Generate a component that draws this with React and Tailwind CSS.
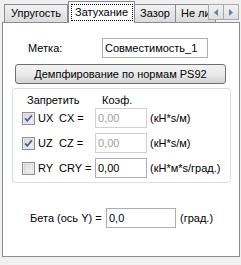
import React from "react";

const font = { fontFamily: '"Liberation Sans", Arial, sans-serif' };

const CheckBox = ({ checked }) => (
  <svg width="13" height="13" viewBox="0 0 13 13" className="shrink-0">
    <defs>
      <linearGradient id="cbg" x1="0" y1="0" x2="1" y2="1">
        <stop offset="0" stopColor="#d8d8d8" />
        <stop offset="1" stopColor="#f7f7f7" />
      </linearGradient>
    </defs>
    <rect x="0.5" y="0.5" width="12" height="12" fill="#f4f4f4" stroke="#8e8f8f" />
    <rect x="2" y="2" width="9" height="9" fill="url(#cbg)" stroke="#c6c6c6" strokeWidth="0.5" />
    {checked && (
      <path d="M3.2 6.4 L5.3 8.8 L9.8 3.4" fill="none" stroke="#4c61a0" strokeWidth="1.8" />
    )}
  </svg>
);

const Edit = ({ value, w, disabled }) => (
  <div
    className={`h-[20px] ${w} border bg-white flex items-center pl-[2px] text-[11px] shrink-0 ${
      disabled ? "text-[#a0a0a0] border-[#d0d0d0]" : "text-black border-[#abadb3]"
    }`}
  >
    {value}
  </div>
);

const Row = ({ checked, axis, label, value, units, disabled }) => (
  <div className="flex items-center h-[20px] text-[11px]">
    <div className="ml-[9px]">
      <CheckBox checked={checked} />
    </div>
    <span className="ml-[3px] w-[21px]">{axis}</span>
    <span className="w-[36px] whitespace-nowrap">{label}</span>
    <Edit value={value} w="w-[52px]" disabled={disabled} />
    <span className="ml-[3px] whitespace-nowrap">{units}</span>
  </div>
);

export default function App() {
  return (
    <div className="w-[241px] h-[265px] bg-[#f0f0f0] relative overflow-hidden text-black text-[11px]" style={font}>
      {/* tabs */}
      <div className="flex items-end h-[22px] pl-[4px] relative z-10">
        <div className="w-[64px] h-[18px] border border-b-0 border-[#898c95] bg-gradient-to-b from-[#f2f2f2] to-[#dbdbdb] flex items-center justify-center">
          Упругость
        </div>
        <div className="w-[67px] h-[22px] -mb-px border border-b-0 border-[#898c95] bg-white flex items-start justify-center pt-[2px]">
          <span className="w-[62px] h-[17px] border border-dotted border-black flex items-center justify-center">
            Затухание
          </span>
        </div>
        <div className="w-[41px] h-[18px] border border-b-0 border-l-0 border-[#898c95] bg-gradient-to-b from-[#f2f2f2] to-[#dbdbdb] flex items-center justify-center">
          Зазор
        </div>
        <div className="w-[40px] h-[18px] border border-b-0 border-l-0 border-[#898c95] bg-gradient-to-b from-[#f2f2f2] to-[#dbdbdb] flex items-center pl-[5px] overflow-hidden whitespace-nowrap">
          Не лин
        </div>
      </div>

      {/* tab scroll arrows */}
      <div className="absolute left-[208px] top-[4px] z-20 flex">
        <div className="w-[16px] h-[16px] border border-[#a9a9a9] bg-gradient-to-b from-[#f4f4f4] to-[#dedede] flex items-center justify-center">
          <svg width="4" height="7" viewBox="0 0 4 7">
            <path d="M4 0 L0 3.5 L4 7 Z" fill="#6a7fa8" />
          </svg>
        </div>
        <div className="w-[16px] h-[16px] -ml-px border border-[#a9a9a9] bg-gradient-to-b from-[#f4f4f4] to-[#dedede] flex items-center justify-center">
          <svg width="4" height="7" viewBox="0 0 4 7">
            <path d="M0 0 L4 3.5 L0 7 Z" fill="#6a7fa8" />
          </svg>
        </div>
      </div>

      {/* panel */}
      <div className="ml-[2px] w-[238px] h-[235px] border border-[#898c95] bg-white flex flex-col">
        <div className="flex items-center h-[20px] mt-[15px]">
          <span className="ml-[25px] w-[74px]">Метка:</span>
          <Edit value="Совместимость_1" w="w-[106px]" />
        </div>

        <div className="ml-[12px] mt-[6px] w-[211px] h-[20px] border border-[#707070] rounded-[3px] bg-gradient-to-b from-[#f2f2f2] via-[#ebebeb] to-[#d3d3d3] flex items-center justify-center">
          Демпфирование по нормам PS92
        </div>

        <div className="ml-[9px] mt-[4px] w-[219px] h-[95px] border border-[#d5dfe5] rounded-[3px] flex flex-col pt-[5px]">
          <div className="flex h-[13px] items-center">
            <span className="ml-[14px] w-[75px]">Запретить</span>
            <span>Коэф.</span>
          </div>
          <div className="flex flex-col gap-[5px] mt-[1px]">
            <Row checked axis="UX" label="CX =" value="0,00" units="(кН*s/м)" disabled />
            <Row checked axis="UZ" label="CZ =" value="0,00" units="(кН*s/м)" disabled />
            <Row axis="RY" label="CRY =" value="0,00" units="(кН*м*s/град.)" />
          </div>
        </div>

        <div className="flex items-center h-[20px] mt-[25px]">
          <span className="ml-[27px] w-[76px] whitespace-nowrap">Бета (ось Y) =</span>
          <Edit value="0,0" w="w-[70px]" />
          <span className="ml-[4px]">(град.)</span>
        </div>
      </div>
    </div>
  );
}
